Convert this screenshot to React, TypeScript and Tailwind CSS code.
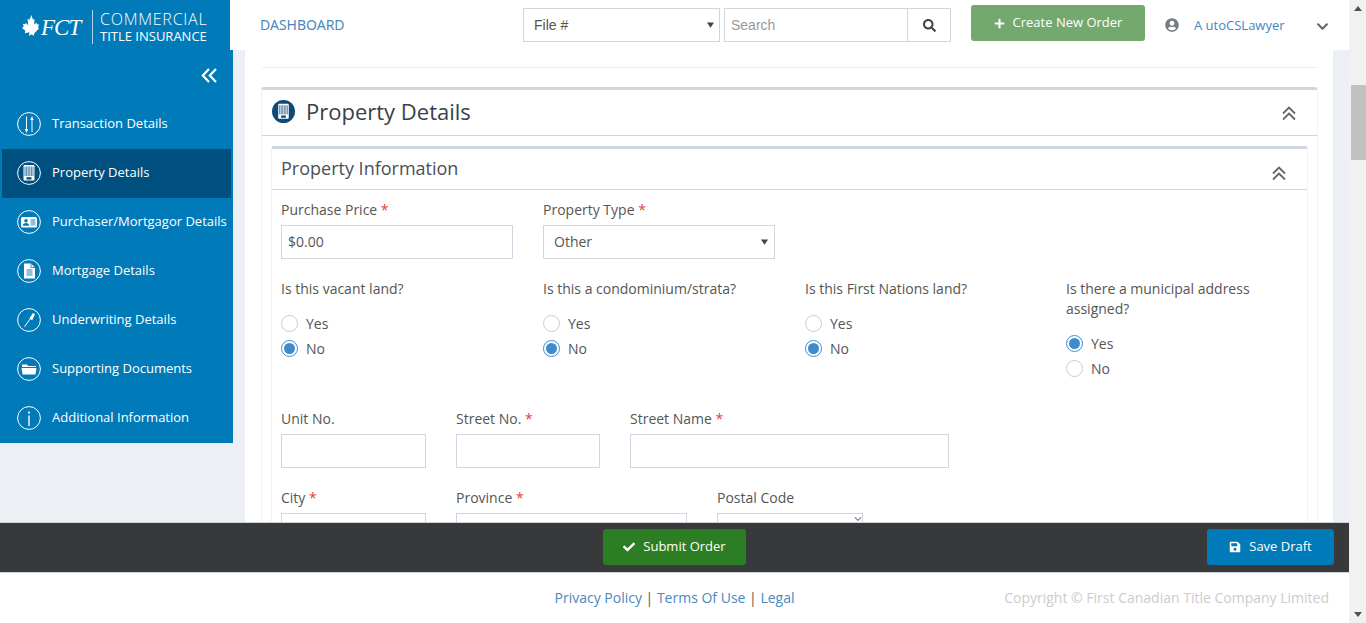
import { FaCheck, FaChevronDown, FaPlus, FaSave, FaSearch, FaUserCircle } from 'react-icons/fa';
import type { ReactNode } from 'react';

const font = "font-['Open_Sans',sans-serif]";

function CircleIcon({ children }: { children: ReactNode }) {
  return (
    <svg viewBox="0 0 24 24" className="w-6 h-6 shrink-0" fill="none">
      <circle cx="12" cy="12" r="11.4" stroke="#fff" strokeWidth="1" />
      {children}
    </svg>
  );
}

function BuildingShape({ slit }: { slit: string }) {
  return (
    <>
      <rect x="6.5" y="4" width="11" height="15.500" rx="1" fill="#fff" />
      {[8, 9.6, 11.2, 12.8, 14.4, 16].map(x => (
        <line key={x} x1={x} y1="5.500" x2={x} y2="15" stroke={slit} strokeWidth="0.7" />
      ))}
      <rect x="9.500" y="16.200" width="5" height="2.300" fill={slit} />
    </>
  );
}

function DoubleUp({ className }: { className: string }) {
  return (
    <svg viewBox="0 0 16 15" className={`w-4 h-[15px] ${className}`} fill="none" stroke="#666" strokeWidth="1.800">
      <path d="M2 7.500L8 1.500l6 6M2 13.500l6-6 6 6" />
    </svg>
  );
}

const navItems: { label: string; active?: boolean; icon: ReactNode }[] = [
  {
    label: 'Transaction Details',
    icon: (
      <CircleIcon>
        <path d="M9.500 4.500V18" stroke="#fff" strokeWidth="1" />
        <path d="M7.800 17h3.400l-1.700 4z" fill="#fff" />
        <path d="M15 20V7" stroke="#fff" strokeWidth="1" />
        <path d="M13.300 8h3.400L15 4z" fill="#fff" />
      </CircleIcon>
    ),
  },
  {
    label: 'Property Details',
    active: true,
    icon: (
      <CircleIcon>
        <BuildingShape slit="#00507f" />
      </CircleIcon>
    ),
  },
  {
    label: 'Purchaser/Mortgagor Details',
    icon: (
      <CircleIcon>
        <rect x="4" y="7" width="16" height="10.500" rx="1.500" fill="#fff" />
        <circle cx="9" cy="10.800" r="1.800" fill="#007ab9" />
        <path d="M5.800 15.800c0-2 1.400-2.800 3.200-2.800s3.200.8 3.200 2.800z" fill="#007ab9" />
        <rect x="13.500" y="9" width="5" height="6.500" fill="#8fc0dd" />
      </CircleIcon>
    ),
  },
  {
    label: 'Mortgage Details',
    icon: (
      <CircleIcon>
        <path d="M7 4.500h7l4 4v11H7z" fill="#fff" />
        <rect x="9.500" y="10" width="6" height="7" fill="#8fc0dd" />
        <path d="M14 4.500v4h4" stroke="#007ab9" strokeWidth="0.8" />
      </CircleIcon>
    ),
  },
  {
    label: 'Underwriting Details',
    icon: (
      <CircleIcon>
        <path d="M7.500 18.800L13 11" stroke="#fff" strokeWidth="1" />
        <path d="M12.300 10.500L16 5l2 1.300-2.800 6z" fill="#fff" />
      </CircleIcon>
    ),
  },
  {
    label: 'Supporting Documents',
    icon: (
      <CircleIcon>
        <path d="M5 9.500V7.500h5l1 1.500h8v1H5z" fill="#fff" />
        <path d="M4.500 11h15l-1 6.500h-13z" fill="#fff" />
      </CircleIcon>
    ),
  },
  {
    label: 'Additional Information',
    icon: (
      <CircleIcon>
        <circle cx="12" cy="6.600" r="1.100" fill="#fff" />
        <rect x="11.300" y="9.500" width="1.400" height="10.500" fill="#fff" />
      </CircleIcon>
    ),
  },
];

function Logo() {
  return (
    <div className="w-[230px] h-full bg-[#007ab9] flex items-center pl-[22px] pt-1 shrink-0">
      <svg viewBox="0 0 20 26" preserveAspectRatio="none" className="w-[17px] h-[25px] shrink-0" fill="#fff">
        <path d="M11 0l2 5 1.800-1-.6 6 2.800-2 .8 2 2.200-.3-1 3.300 1 1-5.500 5-.5 2.500-3-1.500-2.500 2 .2-4-5.500 1 .8-2.700L0 13.500l2-1.500-1-3 3 .5.500-1.500 3 3L6.500 4l2.300 1z" />
      </svg>
      <span className="font-['Liberation_Serif',serif] italic text-white text-[23px] leading-none tracking-[-1px] ml-[2px] w-[43px]">FCT</span>
      <div className="w-px h-[34px] bg-white/70 ml-[8px]" />
      <div className={`${font} ml-[7px] text-white`}>
        <div className="text-[16px] leading-[16px] font-light tracking-[0.75px]">COMMERCIAL</div>
        <div className="text-[13px] leading-[16px] mt-px">TITLE INSURANCE</div>
      </div>
    </div>
  );
}

function Header() {
  return (
    <div className="h-[50px] bg-white flex shrink-0">
      <Logo />
      <a className="text-[14px] text-[#4a88bf] ml-[30px] mt-[17px] leading-4 w-[263px]">DASHBOARD</a>
      <div className="relative w-[197px] h-[34px] mt-2 border border-[#d0d6e0] flex items-center pl-[10px] font-['Liberation_Sans',sans-serif] text-[14px] text-[#555]">
        File #
        <svg viewBox="0 0 8 6" className="absolute right-[5px] top-[13px] w-[7px] h-[6px]" fill="#444">
          <path d="M0 0h8L4 6z" />
        </svg>
      </div>
      <div className="ml-1 w-[227px] h-[34px] mt-2 border border-[#d0d6e0] flex font-['Liberation_Sans',sans-serif] text-[14px] text-[#999]">
        <div className="flex-1 flex items-center pl-[6px]">Search</div>
        <div className="w-[43px] border-l border-[#d0d6e0] flex items-center justify-center text-[#444]">
          <FaSearch className="w-[13px] h-[13px]" />
        </div>
      </div>
      <div className={`${font} ml-5 mt-[5px] w-[174px] h-[36px] rounded-[3px] bg-[#73a96f] flex items-center justify-center gap-2 text-white text-[13px]`}>
        <FaPlus className="w-[11px] h-[11px]" />
        Create New Order
      </div>
      <FaUserCircle className="ml-5 mt-[18px] w-[14px] h-[14px] text-[#777b82]" />
      <span className={`${font} ml-[15px] mt-[16px] text-[13px] leading-[18px] text-[#3f87c5] w-[121px]`}>A utoCSLawyer</span>
      <FaChevronDown className="mt-[20px] w-[15px] h-[13px] text-[#666]" />
    </div>
  );
}

function Sidebar() {
  return (
    <div className={`${font} w-[233px] h-[393px] bg-[#007ab9] text-white shrink-0`}>
      <div className="h-[50px] flex items-start justify-end pr-[16px] pt-[18px]">
        <svg viewBox="0 0 16 15" className="w-4 h-[15px]" fill="none" stroke="#fff" strokeWidth="2.200">
          <path d="M8 1L1.800 7.500 8 14M15 1L8.800 7.500 15 14" />
        </svg>
      </div>
      {navItems.map(item => (
        <div
          key={item.label}
          className={`h-[49px] mx-[2px] pl-[15px] pb-[2px] flex items-center gap-[11px] text-[13px] whitespace-nowrap ${item.active ? 'bg-[#00507f]' : ''}`}
        >
          {item.icon}
          {item.label}
        </div>
      ))}
    </div>
  );
}

function Req() {
  return <span className="text-[#e0413a]"> *</span>;
}

function Field({ label, required, width, inset, children }: { label: string; required?: boolean; width: string; inset?: string; children?: ReactNode }) {
  return (
    <div className={`${width} shrink-0`}>
      <div className="h-5 leading-5 mb-[5px] text-[14px] text-[#555]">
        {label}
        {required && <Req />}
      </div>
      <div className={`h-[34px] pb-[2px] border border-[#d0d6e0] flex items-center relative text-[14px] text-[#555] ${inset ?? 'px-[10px]'}`}>{children}</div>
    </div>
  );
}

function Radio({ label, checked }: { label: string; checked?: boolean }) {
  return (
    <div className="h-[25px] flex items-center gap-2 text-[14px] text-[#555]">
      <span className={`w-[17px] h-[17px] rounded-full border bg-white flex items-center justify-center ${checked ? 'border-[#428bca]' : 'border-[#ccc]'}`}>
        {checked && <span className="w-[11px] h-[11px] rounded-full bg-[#428bca]" />}
      </span>
      {label}
    </div>
  );
}

function Question({ text, yes }: { text: string; yes?: boolean }) {
  return (
    <div className="pr-[30px]">
      <div className="text-[14px] leading-5 text-[#555]">{text}</div>
      <div className="mt-3">
        <Radio label="Yes" checked={yes} />
        <Radio label="No" checked={!yes} />
      </div>
    </div>
  );
}

function PropertyForm() {
  return (
    <div className="pl-[9px] pt-[10px]">
      <div className="flex gap-[30px]">
        <Field label="Purchase Price" required width="w-[232px]" inset="px-[6px]">
          $0.00
        </Field>
        <Field label="Property Type" required width="w-[232px]">
          Other
          <svg viewBox="0 0 8 6" className="absolute right-[6px] top-[13px] w-[7px] h-[6px]" fill="#444">
            <path d="M0 0h8L4 6z" />
          </svg>
        </Field>
      </div>
      <div className="grid grid-cols-[262px_262px_261px_1fr] mt-5">
        <Question text="Is this vacant land?" />
        <Question text="Is this a condominium/strata?" />
        <Question text="Is this First Nations land?" />
        <Question text="Is there a municipal address assigned?" yes />
      </div>
      <div className="flex gap-[30px] mt-7">
        <Field label="Unit No." width="w-[145px]" />
        <Field label="Street No." required width="w-[144px]" />
        <Field label="Street Name" required width="w-[319px]" />
      </div>
      <div className="flex gap-[30px] mt-5">
        <Field label="City" required width="w-[145px]" />
        <Field label="Province" required width="w-[231px]" />
        <Field label="Postal Code" width="w-[146px]">
          <FaChevronDown className="absolute right-[-1px] top-[1px] w-[10px] h-[8px] text-[#8a8f99]" />
        </Field>
      </div>
    </div>
  );
}

function MainPanel() {
  return (
    <div className={`${font} ml-3 w-[1088px] h-full bg-white pl-4 pr-[15px] overflow-hidden shrink-0`}>
      <div className="h-[18px] border-b border-[#e9ecf0] rounded-b-[3px]" />
      <div className="mt-[19px] border-t-[3px] border-x border-[#d0d6e0] border-x-[#f1f2f4] rounded-t-[3px]">
        <div className="h-[46px] border-b border-[#d0d6e0] flex items-center pb-[2px] pl-[10px] pr-[20px]">
          <svg viewBox="0 0 24 24" className="w-[23px] h-[23px] shrink-0" fill="none">
            <circle cx="12" cy="12" r="12" fill="#0d4a78" />
            <BuildingShape slit="#0d4a78" />
          </svg>
          <span className="ml-[11px] text-[22px] text-[#3a3f4a] flex-1">Property Details</span>
          <DoubleUp className="mt-[4px]" />
        </div>
        <div className="mx-[9px] mt-[10px] border-t-[3px] border-x border-[#d0d6e0] border-x-[#f1f2f4] rounded-t-[3px]">
          <div className="h-[41px] border-b border-[#d0d6e0] flex items-center pb-[2px] pl-[9px] pr-[20px]">
            <span className="text-[18px] text-[#4a4f59] flex-1">Property Information</span>
            <DoubleUp className="mt-[10px]" />
          </div>
          <PropertyForm />
        </div>
      </div>
    </div>
  );
}

function ActionBar() {
  return (
    <div className={`${font} h-[51px] pb-px bg-[#38393b] border-y border-[#d0d3d8] grid grid-cols-[1fr_auto_1fr] items-center shrink-0 text-white text-[13px]`}>
      <div />
      <div className="w-[143px] h-9 rounded-[3px] bg-[#2c7e24] flex items-center justify-center gap-2">
        <FaCheck className="w-3 h-3" />
        Submit Order
      </div>
      <div className="flex justify-end pr-[15px]">
        <div className="w-[127px] h-9 rounded-[3px] bg-[#007ab9] flex items-center justify-center gap-2">
          <FaSave className="w-3 h-3" />
          Save Draft
        </div>
      </div>
    </div>
  );
}

function Footer() {
  return (
    <div className={`${font} h-[50px] pb-[2px] bg-white grid grid-cols-[1fr_auto_1fr] items-center text-[14px] shrink-0`}>
      <div />
      <div className="text-[#4a88bf] whitespace-nowrap">
        Privacy Policy <span className="text-[#555]">|</span> Terms Of Use <span className="text-[#555]">|</span> Legal
      </div>
      <div className="text-right pr-5 text-[#ccc] whitespace-nowrap">Copyright © First Canadian Title Company Limited</div>
    </div>
  );
}

function Scrollbar() {
  return (
    <div className="w-[17px] h-full bg-[#f1f1f1] flex flex-col items-center shrink-0">
      <svg viewBox="0 0 8 5" className="w-2 h-[5px] mt-[6px] shrink-0" fill="#505050">
        <path d="M4 0l4 5H0z" />
      </svg>
      <div className="w-[15px] h-[75px] bg-[#c1c1c1] mt-[74px] ml-[1px]" />
      <div className="flex-1" />
      <svg viewBox="0 0 8 5" className="w-2 h-[5px] mb-[6px] shrink-0" fill="#505050">
        <path d="M0 0h8L4 5z" />
      </svg>
    </div>
  );
}

export default function App() {
  return (
    <div className="w-full h-[623px] flex overflow-hidden bg-white">
      <div className="flex-1 min-w-0 flex flex-col">
        <Header />
        <div className="flex-1 min-h-0 bg-[#eceff4] flex overflow-hidden">
          <Sidebar />
          <MainPanel />
        </div>
        <ActionBar />
        <Footer />
      </div>
      <Scrollbar />
    </div>
  );
}
